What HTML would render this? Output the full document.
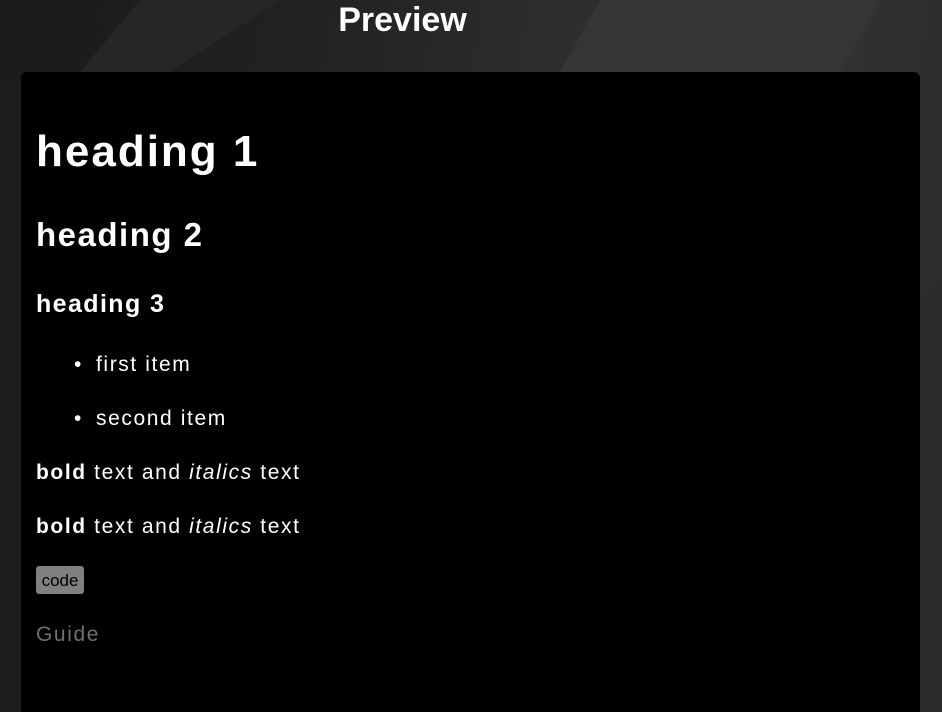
<!DOCTYPE html>
<html><head><style>
html,body{margin:0;padding:0;width:942px;height:712px;overflow:hidden;}
body{background:linear-gradient(100deg,#1a1a1a 0%,#222 30%,#2e2e2e 55%,#333 75%,#2a2a2a 100%);font-family:"Liberation Sans",sans-serif;color:#fff;position:relative;}
.poly{position:absolute;}
h1.t{position:absolute;left:0;width:805px;text-align:center;top:0;margin:0;font-size:34px;line-height:40px;font-weight:bold;letter-spacing:0px;}
.panel{position:absolute;left:21px;top:72px;width:899px;height:660px;background:#000;border-radius:6px;}
.a{position:absolute;left:36px;white-space:nowrap;}
.b{font-size:21px;line-height:26px;letter-spacing:1.6px;}
</style></head><body>
<svg class="poly" width="942" height="712" style="left:0;top:0">
<polygon points="140,0 280,0 170,72 80,72" fill="#262626"/>
<polygon points="600,0 880,0 840,72 560,72" fill="#353535"/>
<polygon points="0,0 60,0 30,72 0,72" fill="#1c1c1c"/>
<polygon points="920,300 942,280 942,712 920,712" fill="#2a2a2a"/>
<polygon points="0,80 21,80 21,712 0,712" fill="#1e1e1e"/>
</svg>
<h1 class="t">Preview</h1>
<div class="panel"></div>
<div class="a" style="top:124px;font-size:44px;line-height:56px;font-weight:bold;letter-spacing:2px">heading 1</div>
<div class="a" style="top:214px;font-size:33px;line-height:42px;font-weight:bold;letter-spacing:1.5px">heading 2</div>
<div class="a" style="top:287px;font-size:25px;line-height:34px;font-weight:bold;letter-spacing:1.4px">heading 3</div>
<div class="a b" style="left:74px;top:352px;">•</div>
<div class="a b" style="left:96px;top:352px;">first item</div>
<div class="a b" style="left:74px;top:406px;">•</div>
<div class="a b" style="left:96px;top:406px;">second item</div>
<div class="a b" style="top:460px;"><b>bold</b> text and <i>italics</i> text</div>
<div class="a b" style="top:514px;"><b>bold</b> text and <i>italics</i> text</div>
<div class="a" style="top:566px;width:48px;height:28px;background:#808080;border-radius:3px;color:#000;font-size:17px;line-height:30px;text-align:center">code</div>
<div class="a b" style="top:622px;color:#707070">Guide</div>
</body></html>
